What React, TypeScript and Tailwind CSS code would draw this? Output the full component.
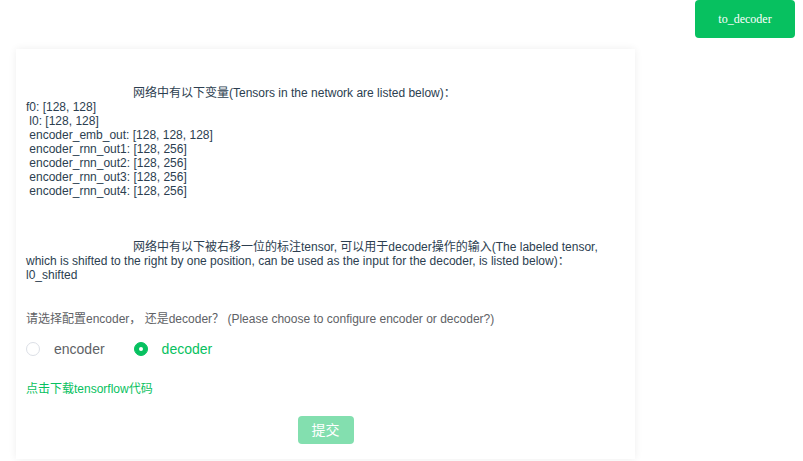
import { useState } from "react";

const tensors = [
    "f0: [128, 128]",
    " l0: [128, 128]",
    " encoder_emb_out: [128, 128, 128]",
    " encoder_rnn_out1: [128, 256]",
    " encoder_rnn_out2: [128, 256]",
    " encoder_rnn_out3: [128, 256]",
    " encoder_rnn_out4: [128, 256]",
];

const Radio = ({ label, checked, onClick }: { label: string; checked: boolean; onClick: () => void }) => (
    <label onClick={onClick} className="flex items-center cursor-pointer">
        <span
            className={`w-[14px] h-[14px] rounded-full border flex items-center justify-center ${checked ? "bg-[#07c160] border-[#07c160]" : "bg-white border-[#dcdfe6]"
                }`}
        >
            {checked && <span className="w-[4px] h-[4px] rounded-full bg-white" />}
        </span>
        <span className={`ml-[14px] text-[14px] leading-[14px] ${checked ? "text-[#07c160]" : "text-[#606266]"}`}>
            {label}
        </span>
    </label>
);

export default function App() {
    const [mode, setMode] = useState<"encoder" | "decoder">("decoder");

    return (
        <div className="w-[803px] h-[461px] bg-white overflow-hidden font-['Liberation_Sans','Noto_Sans_CJK_SC',sans-serif]">
            <div className="flex justify-end pr-[8px]">
                <button className="w-[100px] h-[38px] rounded-[4px] bg-[#07c160] text-white text-[12px] font-['Liberation_Serif',serif]">
                    to_decoder
                </button>
            </div>

            <div className="ml-[16px] mt-[11px] w-[619px] h-[410px] bg-white shadow-[0_0_8px_rgba(0,0,0,0.07)] px-[10px] pt-[37px]">
                <div className="text-[12px] leading-[14px] text-[#2c3e50] whitespace-pre-wrap">
                    <div>
                        <span className="pl-[107px]">网络中有以下变量(Tensors in the network are listed below)：</span>
                    </div>
                    {tensors.map(t => (
                        <div key={t}>{t}</div>
                    ))}
                </div>

                <div className="mt-[42px] text-[12px] leading-[14px] text-[#2c3e50]">
                    <span className="pl-[107px]">
                        网络中有以下被右移一位的标注tensor, 可以用于decoder操作的输入(The labeled tensor,
                    </span>
                    <br />
                    which is shifted to the right by one position, can be used as the input for the decoder, is listed below)：
                    <br />
                    l0_shifted
                </div>

                <div className="mt-[30px] text-[12px] leading-[14px] text-[#606266] whitespace-pre">
                    请选择配置encoder， 还是decoder？ (Please choose to configure encoder or decoder?)
                </div>

                <div className="mt-[16px] flex gap-[29px]">
                    <Radio label="encoder" checked={mode === "encoder"} onClick={() => setMode("encoder")} />
                    <Radio label="decoder" checked={mode === "decoder"} onClick={() => setMode("decoder")} />
                </div>

                <div className="mt-[26px] text-[12px] leading-[14px] text-[#07c160] cursor-pointer">
                    点击下载tensorflow代码
                </div>

                <div className="mt-[20px] flex justify-center">
                    <button className="w-[56px] h-[28px] rounded-[4px] bg-[#83dfaf] text-white text-[14px]">
                        提交
                    </button>
                </div>
            </div>
        </div>
    );
}
